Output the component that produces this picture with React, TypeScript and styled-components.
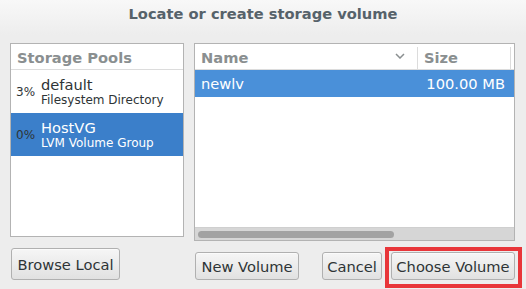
import React from 'react';
import styled, { createGlobalStyle } from 'styled-components';

const GlobalStyle = createGlobalStyle`
  html, body {
    margin: 0;
    padding: 0;
  }
  body {
    background: #ededed;
    font-family: 'DejaVu Sans', 'Liberation Sans', sans-serif;
    font-size: 14.67px;
    color: #2e3436;
  }
`;

const pools = [
  { percent: '3%', name: 'default', type: 'Filesystem Directory', selected: false },
  { percent: '0%', name: 'HostVG', type: 'LVM Volume Group', selected: true },
];

const volumes = [{ name: 'newlv', size: '100.00 MB', selected: true }];

export default function App() {
  return (
    <>
      <GlobalStyle />
      <Dialog>
        <TitleBar>Locate or create storage volume</TitleBar>
        <Body>
          <Column>
            <Panel $height={194}>
              <HeaderRow>
                <HeaderCell>Storage Pools</HeaderCell>
              </HeaderRow>
              {pools.map(pool => (
                <PoolRow key={pool.name} $selected={pool.selected}>
                  <Percent>{pool.percent}</Percent>
                  <PoolText>
                    <PoolName>{pool.name}</PoolName>
                    <PoolType>{pool.type}</PoolType>
                  </PoolText>
                </PoolRow>
              ))}
            </Panel>
            <ButtonRow>
              <Button $tall $width={109}>Browse Local</Button>
            </ButtonRow>
          </Column>

          <Column>
            <Panel $height={198}>
              <HeaderRow>
                <HeaderCell $width={223} $divider>
                  Name
                  <SortArrow width="10" height="6" viewBox="0 0 10 6">
                    <polyline points="1,1 5,5 9,1" fill="none" stroke="#8a8f90" strokeWidth="1.5" />
                  </SortArrow>
                </HeaderCell>
                <HeaderCell $width={93} $divider>Size</HeaderCell>
              </HeaderRow>
              {volumes.map(vol => (
                <VolumeRow key={vol.name} $selected={vol.selected}>
                  <NameCell>{vol.name}</NameCell>
                  <SizeCell>{vol.size}</SizeCell>
                </VolumeRow>
              ))}
              <Trough>
                <Thumb />
              </Trough>
            </Panel>
            <ButtonRow>
              <Button $width={104}>New Volume</Button>
              <Button $width={60} $push>Cancel</Button>
              <Highlight>
                <Button $width={124}>Choose Volume</Button>
              </Highlight>
            </ButtonRow>
          </Column>
        </Body>
      </Dialog>
    </>
  );
}

const Dialog = styled.div`
  width: 526px;
  height: 289px;
  overflow: hidden;
  background: #ededed;
  display: flex;
  flex-direction: column;
`;

const TitleBar = styled.div`
  height: 35px;
  box-sizing: border-box;
  padding-top: 5px;
  background: linear-gradient(#f8f8f8, #ededed);
  text-align: center;
  font-weight: bold;
  color: #56626a;
`;

const Body = styled.div`
  display: grid;
  grid-template-columns: 174px 321px;
  column-gap: 10px;
  padding: 8px 0 0 10px;
`;

const Column = styled.div`
  display: flex;
  flex-direction: column;
`;

const Panel = styled.div<{ $height: number }>`
  height: ${p => p.$height}px;
  box-sizing: border-box;
  border: 1px solid #b3b3b3;
  background: #fff;
  display: flex;
  flex-direction: column;
  overflow: hidden;
`;

const HeaderRow = styled.div`
  height: 26px;
  flex: none;
  box-sizing: border-box;
  border-bottom: 1px solid #dcdcdc;
  display: flex;
  font-weight: bold;
  color: #8a8f90;
`;

const HeaderCell = styled.div<{ $width?: number; $divider?: boolean }>`
  width: ${p => (p.$width ? `${p.$width}px` : 'auto')};
  flex: ${p => (p.$width ? 'none' : '1')};
  box-sizing: border-box;
  display: flex;
  align-items: center;
  height: 22px;
  margin-top: 3px;
  padding: 0 0 2px 6px;
  border-right: ${p => (p.$divider ? '1px solid #dcdcdc' : 'none')};
`;

const SortArrow = styled.svg`
  margin-left: auto;
  margin-right: 12px;
  margin-top: -2px;
`;

const PoolRow = styled.div<{ $selected?: boolean }>`
  height: 43px;
  flex: none;
  display: flex;
  align-items: center;
  background: ${p => (p.$selected ? '#3b7fca' : 'transparent')};
  color: ${p => (p.$selected ? '#fff' : '#2e3436')};
`;

const Percent = styled.span`
  width: 30px;
  padding-left: 5px;
  box-sizing: border-box;
  font-size: 12px;
  color: #2e3436;
`;

const PoolText = styled.div`
  display: flex;
  flex-direction: column;
`;

const PoolName = styled.span`
  line-height: 17px;
`;

const PoolType = styled.span`
  font-size: 12px;
  line-height: 14px;
`;

const VolumeRow = styled.div<{ $selected?: boolean }>`
  height: 27px;
  flex: none;
  display: flex;
  align-items: center;
  background: ${p => (p.$selected ? '#4a90d9' : 'transparent')};
  color: ${p => (p.$selected ? '#fff' : '#2e3436')};
`;

const NameCell = styled.span`
  width: 223px;
  padding-left: 6px;
  box-sizing: border-box;
`;

const SizeCell = styled.span`
  width: 93px;
  padding-right: 6px;
  box-sizing: border-box;
  text-align: right;
`;

const Trough = styled.div`
  margin-top: auto;
  height: 13px;
  box-sizing: border-box;
  padding: 3px;
  background: #d6d6d6;
  border-top: 1px solid #cfcfcf;
`;

const Thumb = styled.div`
  width: 196px;
  height: 7px;
  border-radius: 4px;
  background: #a2a2a2;
`;

const ButtonRow = styled.div`
  display: flex;
  align-items: flex-start;
  margin-top: 11px;
`;

const Button = styled.button<{ $tall?: boolean; $push?: boolean; $width: number }>`
  width: ${p => p.$width}px;
  height: ${p => (p.$tall ? 32 : 28)}px;
  margin: 0 0 0 ${p => (p.$push ? 'auto' : '1px')};
  padding: 0;
  border: 1px solid #b0b0b0;
  border-radius: 3px;
  background: linear-gradient(#f6f6f6, #e1e1e1);
  box-shadow: 0 1px 0 rgba(255, 255, 255, 0.6) inset;
  font: inherit;
  color: #2e3436;
  white-space: nowrap;
  overflow: hidden;
`;

const Highlight = styled.div`
  position: relative;
  display: flex;
  margin-left: 8px;

  &::after {
    content: '';
    position: absolute;
    top: -5px;
    left: -5px;
    right: -7px;
    bottom: -8px;
    border: 4px solid #e8363a;
    pointer-events: none;
  }
`;
